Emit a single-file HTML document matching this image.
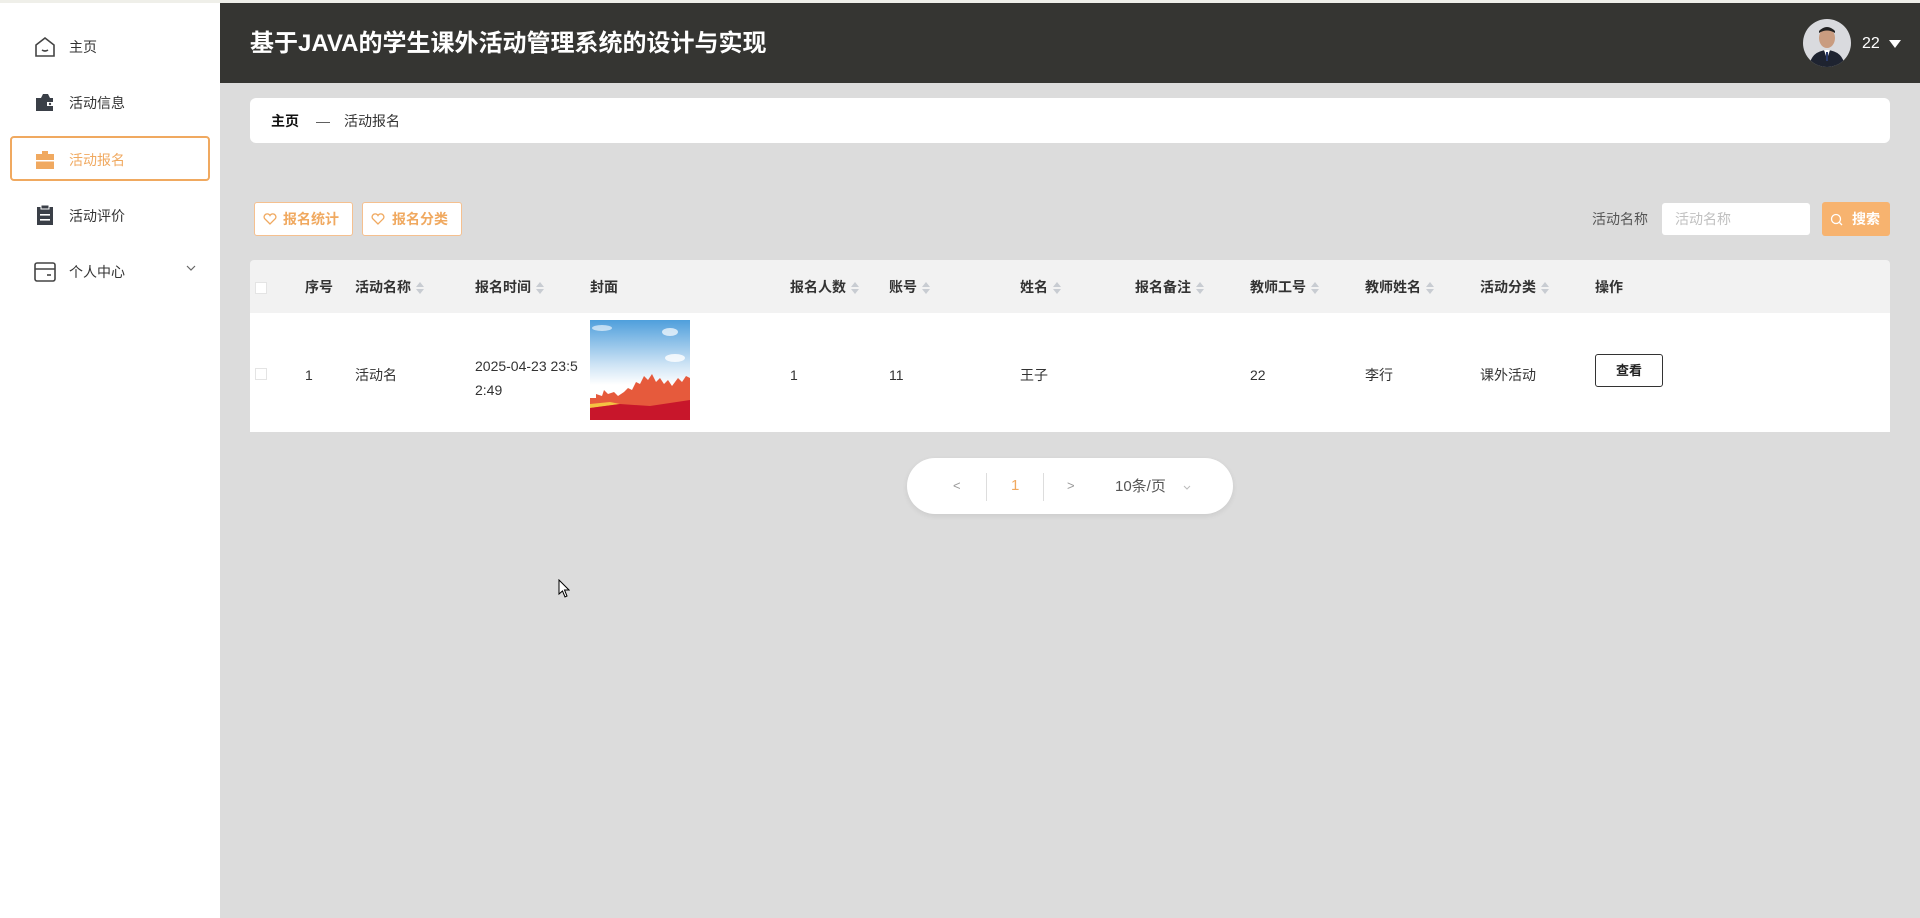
<!DOCTYPE html>
<html><head><meta charset="utf-8"><style>
*{box-sizing:border-box;margin:0;padding:0}
body{width:1920px;height:918px;position:relative;overflow:hidden;background:#dcdcdc;font-family:"Liberation Sans","Noto Sans CJK SC",sans-serif;color:#333}
.a{position:absolute;white-space:nowrap}
#side{position:absolute;left:0;top:3px;width:220px;height:915px;background:#fff}
.mi{position:absolute;left:69px;font-size:14px;color:#333;line-height:20px}
.ic{position:absolute;left:34px}
.th{position:absolute;top:278px;font-size:14px;font-weight:bold;color:#333;line-height:18px}
.td{position:absolute;font-size:14px;color:#333;line-height:18px}
.s{display:inline-block;vertical-align:middle;margin-left:5px;width:8px;height:13px;position:relative}
.s:before{content:"";position:absolute;left:0;top:0;border:4px solid transparent;border-bottom:5px solid #c8ccd2;border-top:0}
.s:after{content:"";position:absolute;left:0;top:7px;border:4px solid transparent;border-top:5px solid #c8ccd2;border-bottom:0}
</style></head><body>
<div class="a" style="left:0;top:0;width:1920px;height:3px;background:#efefe9"></div>
<div id="side"></div>
<svg class="ic" style="top:36px" width="22" height="22" viewBox="0 0 22 22" fill="none" stroke="#444" stroke-width="1.6"><path d="M2 9 L11 2 L20 9 V20 H2 Z"/><path d="M8 14 Q11 16 14 14"/></svg>
<div class="mi" style="top:37px">主页</div>
<svg class="ic" style="top:93px" width="22" height="20" viewBox="0 0 22 20"><path d="M2 5 H19 V18 H2 Z" fill="#3a3f47"/><path d="M9 1 L14 1 L16 5 H7 Z" fill="#3a3f47"/><rect x="13" y="9" width="7" height="4" fill="#fff"/><circle cx="16" cy="11" r="1.2" fill="#3a3f47"/></svg>
<div class="mi" style="top:93px">活动信息</div>
<div class="a" style="left:10px;top:136px;width:200px;height:45px;border:2px solid #f0a960;border-radius:4px"></div>
<svg class="ic" style="top:150px" width="22" height="20" viewBox="0 0 22 20"><path d="M8 1 H14 V4 H8 Z" fill="#f0a960"/><rect x="2" y="4" width="18" height="15" fill="#f0a960"/><rect x="2" y="10" width="18" height="1.5" fill="#fff"/></svg>
<div class="mi" style="top:150px;color:#f0a960">活动报名</div>
<svg class="ic" style="top:204px" width="22" height="22" viewBox="0 0 22 22"><rect x="3" y="3" width="16" height="18" fill="#3a3f47"/><rect x="7" y="1" width="8" height="4" fill="#3a3f47" stroke="#fff" stroke-width="1"/><rect x="6" y="10" width="10" height="1.6" fill="#fff"/><rect x="6" y="15" width="10" height="1.6" fill="#fff"/></svg>
<div class="mi" style="top:206px">活动评价</div>
<svg class="ic" style="top:262px" width="22" height="20" viewBox="0 0 22 20" fill="none" stroke="#444" stroke-width="1.6"><rect x="1" y="1" width="20" height="18" rx="2"/><path d="M1 7 H21"/><path d="M13 13 H17"/></svg>
<div class="mi" style="top:262px">个人中心</div>
<svg class="a" style="left:186px;top:265px" width="10" height="7" viewBox="0 0 10 7" fill="none" stroke="#666" stroke-width="1.2"><path d="M1 1 L5 5 L9 1"/></svg>
<div class="a" style="left:220px;top:3px;width:1700px;height:80px;background:#353532"></div>
<div class="a" style="left:250px;top:28px;font-size:24px;font-weight:bold;color:#fff;line-height:32px">基于JAVA的学生课外活动管理系统的设计与实现</div>
<svg class="a" style="left:1803px;top:19px" width="48" height="48" viewBox="0 0 48 48"><defs><clipPath id="c"><circle cx="24" cy="24" r="24"/></clipPath></defs><g clip-path="url(#c)"><rect width="48" height="48" fill="#d9dade"/><ellipse cx="24" cy="19" rx="8" ry="10" fill="#c99c80"/><path d="M16 12 Q24 4 32 12 L32 14 Q24 9 16 14Z" fill="#222"/><path d="M6 48 Q8 32 24 31 Q40 32 42 48Z" fill="#1e2330"/><path d="M21 31 L24 40 L27 31Z" fill="#fff"/><path d="M23 33 L25 33 L25 42 L23 42Z" fill="#2a3a6a"/></g></svg>
<div class="a" style="left:1862px;top:34px;font-size:16px;color:#fff;line-height:20px">22</div>
<div class="a" style="left:1889px;top:40px;border:6px solid transparent;border-top:8px solid #fff;border-bottom:0"></div>
<div class="a" style="left:250px;top:98px;width:1640px;height:45px;background:#fff;border-radius:6px"></div>
<div class="a" style="left:271px;top:112px;font-size:14px;font-weight:bold;color:#111;line-height:18px">主页</div>
<div class="a" style="left:316px;top:112px;font-size:14px;color:#555;line-height:18px">—</div>
<div class="a" style="left:344px;top:112px;font-size:14px;color:#333;line-height:18px">活动报名</div>
<div class="a" style="left:254px;top:202px;width:99px;height:34px;background:#fff;border:1px solid #f5c08f;border-radius:3px;font-size:14px;font-weight:bold;color:#f0a960;line-height:32px;padding-left:28px">报名统计</div>
<div class="a" style="left:362px;top:202px;width:100px;height:34px;background:#fff;border:1px solid #f5c08f;border-radius:3px;font-size:14px;font-weight:bold;color:#f0a960;line-height:32px;padding-left:29px">报名分类</div>
<svg class="a" style="left:263px;top:213px" width="14" height="12" viewBox="0 0 14 12" fill="none" stroke="#f0a960" stroke-width="1.3"><path d="M7 11 L1.5 5.5 A3 3 0 0 1 7 2.5 A3 3 0 0 1 12.5 5.5 Z"/></svg>
<svg class="a" style="left:371px;top:213px" width="14" height="12" viewBox="0 0 14 12" fill="none" stroke="#f0a960" stroke-width="1.3"><path d="M7 11 L1.5 5.5 A3 3 0 0 1 7 2.5 A3 3 0 0 1 12.5 5.5 Z"/></svg>
<div class="a" style="left:1592px;top:210px;font-size:14px;color:#555;line-height:18px">活动名称</div>
<div class="a" style="left:1662px;top:203px;width:148px;height:32px;background:#fff;border-radius:3px;font-size:14px;color:#c0c0c0;line-height:32px;padding-left:13px">活动名称</div>
<div class="a" style="left:1822px;top:202px;width:68px;height:34px;background:#f7b36f;border-radius:3px;font-size:14px;font-weight:bold;color:#fff;line-height:34px;padding-left:30px">搜索</div>
<svg class="a" style="left:1830px;top:213px" width="13" height="13" viewBox="0 0 13 13" fill="none" stroke="#fff" stroke-width="1.3"><circle cx="6" cy="6" r="4.5"/><path d="M9.5 9.5 L12 12"/></svg>
<div class="a" style="left:250px;top:260px;width:1640px;height:53px;background:#f2f2f2;border-radius:4px 4px 0 0"></div>
<div class="a" style="left:250px;top:313px;width:1640px;height:119px;background:#fff"></div>
<div class="a" style="left:255px;top:282px;width:12px;height:12px;background:#fff;border:1px solid #e4e4e4"></div>
<div class="a" style="left:255px;top:368px;width:12px;height:12px;background:#fff;border:1px solid #e4e4e4"></div>
<div class="th" style="left:305px">序号</div>
<div class="th" style="left:355px">活动名称<span class="s"></span></div>
<div class="th" style="left:475px">报名时间<span class="s"></span></div>
<div class="th" style="left:590px">封面</div>
<div class="th" style="left:790px">报名人数<span class="s"></span></div>
<div class="th" style="left:889px">账号<span class="s"></span></div>
<div class="th" style="left:1020px">姓名<span class="s"></span></div>
<div class="th" style="left:1135px">报名备注<span class="s"></span></div>
<div class="th" style="left:1250px">教师工号<span class="s"></span></div>
<div class="th" style="left:1365px">教师姓名<span class="s"></span></div>
<div class="th" style="left:1480px">活动分类<span class="s"></span></div>
<div class="th" style="left:1595px">操作</div>
<div class="td" style="left:305px;top:366px">1</div>
<div class="td" style="left:355px;top:366px">活动名</div>
<div class="td" style="left:475px;top:354px;line-height:24px">2025-04-23 23:5<br>2:49</div>
<svg class="a" style="left:590px;top:320px" width="100" height="100" viewBox="0 0 100 100"><defs><linearGradient id="sk" x1="0" y1="0" x2="0" y2="1"><stop offset="0" stop-color="#4f9fdc"/><stop offset=".45" stop-color="#cfe4f5"/><stop offset=".65" stop-color="#fff"/></linearGradient></defs><rect width="100" height="100" fill="url(#sk)"/><ellipse cx="80" cy="12" rx="8" ry="4" fill="#fff" opacity=".7"/><ellipse cx="85" cy="38" rx="10" ry="4" fill="#fff" opacity=".8"/><ellipse cx="12" cy="8" rx="10" ry="3" fill="#fff" opacity=".6"/><path d="M0 84 L0 78 L6 78 L6 74 L12 76 L14 70 L18 74 L24 72 L28 76 L34 72 L38 68 L42 70 L46 62 L50 64 L54 56 L58 60 L62 54 L66 62 L70 58 L74 64 L78 60 L82 66 L88 58 L92 62 L96 56 L100 58 L100 100 L0 100Z" fill="#e65a3c"/><path d="M0 84 L20 82 L30 84 L0 88Z" fill="#f5c242"/><path d="M0 88 L30 84 L60 86 L100 80 L100 100 L0 100Z" fill="#c8162b"/></svg>
<div class="td" style="left:790px;top:366px">1</div>
<div class="td" style="left:889px;top:366px">11</div>
<div class="td" style="left:1020px;top:366px">王子</div>
<div class="td" style="left:1250px;top:366px">22</div>
<div class="td" style="left:1365px;top:366px">李行</div>
<div class="td" style="left:1480px;top:366px">课外活动</div>
<div class="a" style="left:1595px;top:354px;width:68px;height:33px;border:1px solid #333;border-radius:3px;background:#fff;font-size:13px;font-weight:bold;color:#222;text-align:center;line-height:31px">查看</div>
<div class="a" style="left:907px;top:458px;width:326px;height:56px;background:#fff;border-radius:28px;box-shadow:0 2px 6px rgba(0,0,0,.08)"></div>
<div class="a" style="left:953px;top:476px;font-size:13px;color:#999;line-height:20px">&lt;</div>
<div class="a" style="left:986px;top:473px;width:1px;height:28px;background:#ddd"></div>
<div class="a" style="left:1011px;top:476px;font-size:15px;color:#f0a960;line-height:20px">1</div>
<div class="a" style="left:1043px;top:473px;width:1px;height:28px;background:#ddd"></div>
<div class="a" style="left:1067px;top:476px;font-size:13px;color:#999;line-height:20px">&gt;</div>
<div class="a" style="left:1115px;top:477px;font-size:15px;color:#555;line-height:20px">10条/页</div>
<svg class="a" style="left:1183px;top:485px" width="8" height="6" viewBox="0 0 8 6" fill="none" stroke="#bbb" stroke-width="1"><path d="M1 1 L4 4 L7 1"/></svg>
<svg class="a" style="left:558px;top:579px" width="12" height="19" viewBox="0 0 12 19"><path d="M1 1 L1 15 L4.5 12 L7 18 L9 17 L6.5 11 L11 11 Z" fill="#fff" stroke="#000" stroke-width="1"/></svg>
</body></html>
